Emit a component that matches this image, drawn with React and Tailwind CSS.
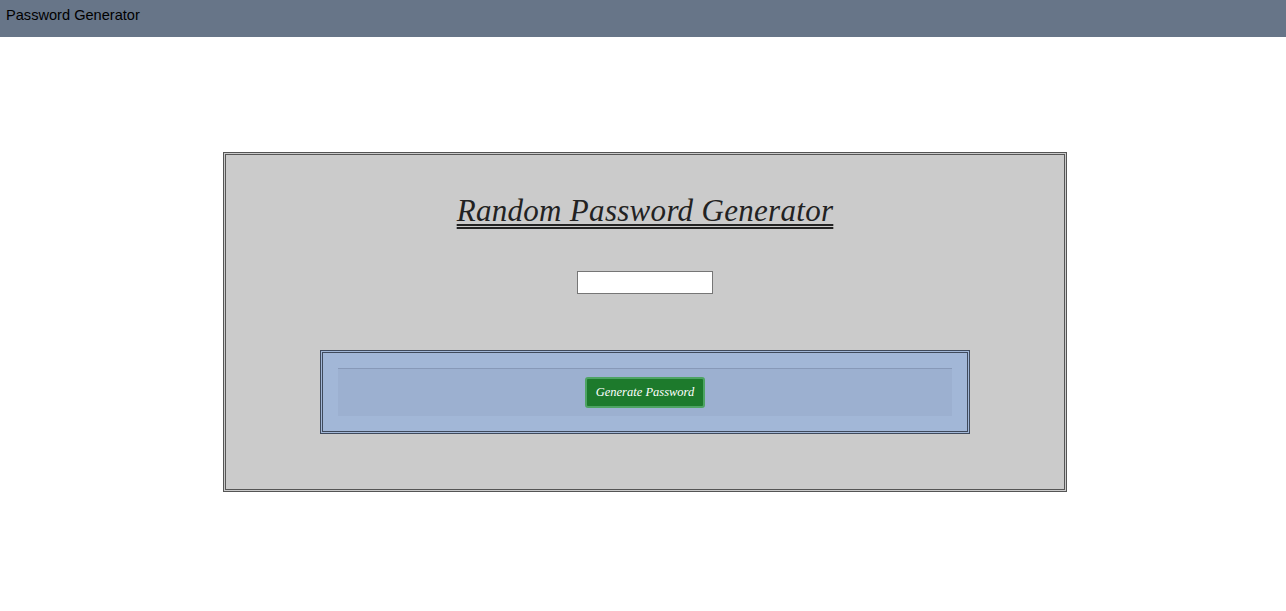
export default function App() {
  return (
    <div className="min-h-[611px] bg-white">
      <header className="h-[37px] bg-[#677588] flex items-center px-[6px] pb-[5px]">
        <span className="text-[14.6px] text-black" style={{ fontFamily: '"Liberation Sans", Arial, sans-serif' }}>
          Password Generator
        </span>
      </header>
      <main className="pt-[115px]">
        <div className="ml-[223px] w-[844px] h-[340px] border-[3px] border-double border-[#555] bg-[#cbcbcb] flex flex-col items-center">
          <h1
            className="mt-[36px] text-[31px] italic text-[#222] leading-[40px] underline decoration-double decoration-[2px] underline-offset-[3px]"
            style={{ fontFamily: '"Liberation Serif", "Times New Roman", serif', letterSpacing: '0.3px' }}
          >
            Random Password Generator
          </h1>
          <input
            type="text"
            className="mt-[40px] w-[136px] h-[23px] bg-white border border-[#767676] outline-none"
          />
          <div className="mt-[56px] w-[650px] h-[84px] border-[3px] border-double border-[#3f4a5c] bg-[#a2b7d7] px-[15px] pt-[15px]">
            <div className="h-[48px] bg-[#9cb0d0] border-t border-[#8799b8] flex items-center justify-center">
              <button
                className="w-[120px] h-[31px] rounded-[3px] bg-[#1d7a2c] border-2 border-[#4ea463] text-white italic text-[12.5px] whitespace-nowrap"
                style={{ fontFamily: '"Liberation Serif", "Times New Roman", serif' }}
              >
                Generate Password
              </button>
            </div>
          </div>
        </div>
      </main>
    </div>
  );
}
